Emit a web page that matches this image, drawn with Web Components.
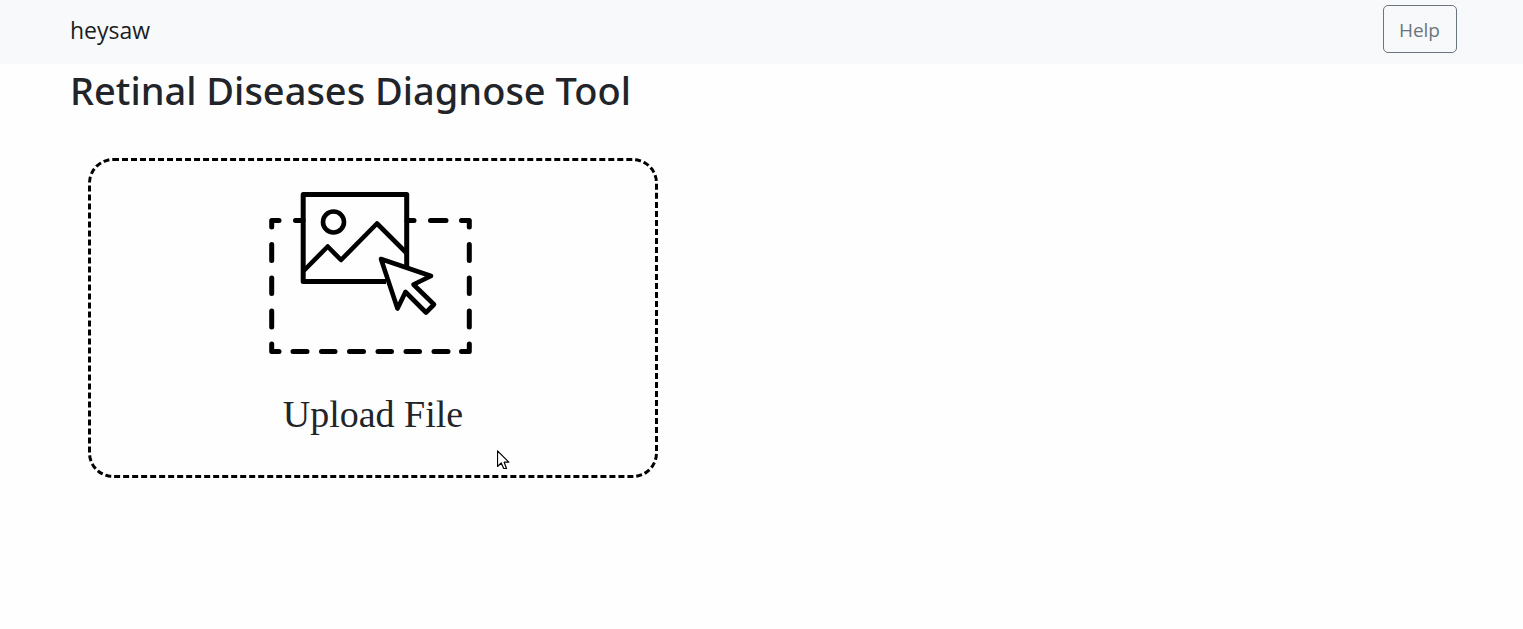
<!DOCTYPE html>
<html lang="en">
<head>
<meta charset="utf-8">
<meta name="viewport" content="width=device-width, initial-scale=1">
<title>Retinal Diseases Diagnose Tool</title>
<style>
body { margin: 0; background: #fefefe; color: #212529; font-family: "Open Sans", "Noto Sans", sans-serif; }
</style>
</head>
<body>
<diagnose-app></diagnose-app>
<script>
const define = (name, html) => {
  const template = document.createElement('template');
  template.innerHTML = html;
  customElements.define(name, class extends HTMLElement {
    constructor() {
      super();
      this.attachShadow({ mode: 'open' }).append(template.content.cloneNode(true));
    }
  });
};

define('outline-button', `
<style>
:host { display: block; }
button { display: block; height: 48px; padding: 2px 16px 0 15px; border: 1px solid #6c757d; border-radius: 5px; background: transparent; color: #6c757d; font: 400 19px/30px "Open Sans", sans-serif; cursor: pointer; }
</style>
<button type="button"><slot></slot></button>`);

define('nav-bar', `
<style>
:host { display: block; background: #f8f9fb; }
nav { display: flex; align-items: center; justify-content: space-between; padding: 5px 66px 11px 70px; }
a { color: #1b1e21; padding-top: 2px; font-size: 23px; line-height: 36px; text-decoration: none; }
</style>
<nav><a href="#"><slot name="brand"></slot></a><slot></slot></nav>`);

define('upload-icon', `
<style>
:host { display: block; }
svg { display: block; }
</style>
<svg width="220" height="180" viewBox="0 0 220 180" fill="none" stroke="#000" stroke-width="5" stroke-linecap="round" stroke-linejoin="round" aria-hidden="true">
<path d="M19 40.5H11.7V47M201.500 40.500H209.300V47M11.700 164V171.500H19M209.300 164V171.500H201.500M35.500 40.500H43M147 40.500H154M170.500 40.500H186"/>
<path d="M11.700 64.500V80.500M11.700 98V113.500M11.700 131V147M209.300 64.500V80.500M209.300 98V113.500M209.300 131V147"/>
<path d="M33 171.500H47M61.500 171.500H75M89.500 171.500H103.500M118 171.500H131.500M146 171.500H159.500M174 171.500H188"/>
<path d="M146.700 86V14.500H43.200V101.500H126" stroke-linecap="butt"/>
<circle cx="73.500" cy="42" r="10.500" stroke-width="4.600"/>
<path d="M44.500 90L67.700 66.500L81 80L117 43.500L145.500 72" stroke-width="4.600"/>
<path d="M121 79L171 96L153.500 104.500L174 124.500L166 132.500L145.500 112L137.500 128.500Z" stroke-width="4.600"/>
</svg>`);

define('mouse-pointer', `
<style>
:host { display: block; }
svg { display: block; }
</style>
<svg width="13" height="20" viewBox="0 0 13 20" aria-hidden="true"><path d="M.500 .800V16.500L4.200 13L6.700 18.500H9.500L7.200 12.200H11.800Z" fill="#fff" stroke="#000" stroke-width="1.200" stroke-linejoin="round"/></svg>`);

define('upload-box', `
<style>
:host { display: block; position: relative; box-sizing: border-box; max-width: 570px; }
label { display: flex; flex-direction: column; align-items: center; gap: 24px; padding: 19px 24px 31px 18px; border: 3px dashed #000; border-radius: 25px; cursor: pointer; }
span { font: 400 38px/60px "Liberation Serif", serif; padding-left: 6px; }
input { position: absolute; width: 1px; height: 1px; opacity: 0; }
mouse-pointer { position: absolute; left: 409px; top: 292px; }
</style>
<label for="file"><upload-icon></upload-icon><span><slot></slot></span></label>
<input id="file" type="file" accept="image/*">
<mouse-pointer></mouse-pointer>`);

define('diagnose-app', `
<style>
:host { display: block; }
main { padding: 0 66px 0 70px; }
h1 { margin: 0; font-family: "Noto Sans", "Open Sans", sans-serif; font-size: 38px; font-weight: 500; line-height: 52px; }
upload-box { margin: 42px 18px; }
</style>
<nav-bar><span slot="brand">heysaw</span><outline-button>Help</outline-button></nav-bar>
<main><h1>Retinal Diseases Diagnose Tool</h1><upload-box>Upload File</upload-box></main>`);
</script>
</body>
</html>
